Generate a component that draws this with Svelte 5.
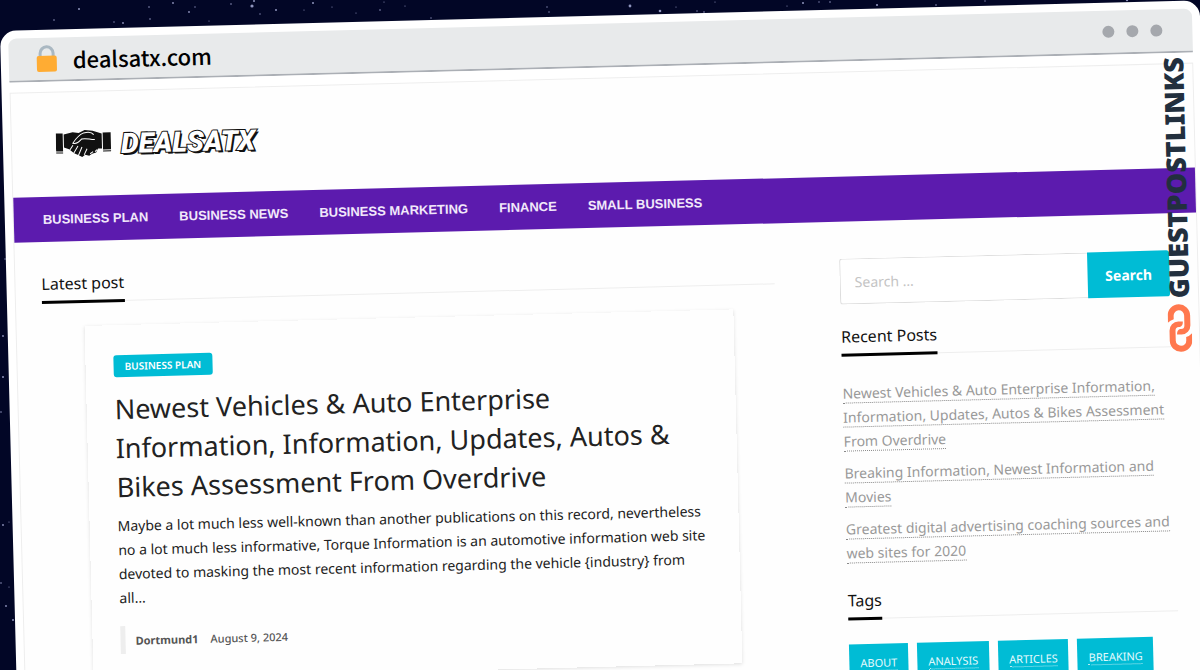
<script>
  const menu = [
    'Business Plan',
    'Business News',
    'Business Marketing',
    'Finance',
    'Small Business',
  ];

  const recentPosts = [
    'Newest Vehicles & Auto Enterprise Information, Information, Updates, Autos & Bikes Assessment From Overdrive',
    'Breaking Information, Newest Information and Movies',
    'Greatest digital advertising coaching sources and web sites for 2020',
  ];

  const tags = ['About', 'Analysis', 'Articles', 'Breaking'];

  // x, y, radius
  const stars = [
    [54, 20, 0.8],
    [79, 9, 1],
    [114, 22, 0.7],
    [123, 23, 0.9],
    [149, 7, 0.8],
    [150, 19, 0.8],
    [173, 3, 0.9],
    [189, 12, 0.9],
    [195, 7, 0.7],
    [209, 21, 0.6],
    [231, 4, 0.8],
    [252, 6, 1.6],
    [254, 1, 1],
    [260, 14, 0.7],
    [276, 10, 1],
    [304, 10, 0.6],
    [313, 3, 1],
    [332, 7, 0.6],
    [356, 13, 0.6],
    [380, 10, 0.8],
    [384, 2, 0.6],
    [405, 6, 0.6],
    [431, 18, 0.7],
    [547, 7, 0.7],
    [549, 12, 0.7],
    [630, 6, 1.4],
    [660, 11, 1.3],
    [676, 7, 0.6],
    [697, 11, 0.7],
    [704, 12, 0.8],
    [715, 2, 0.6],
    [787, 6, 0.6],
    [803, 3, 1],
    [819, 2, 0.7],
    [830, 2, 0.8],
    [877, 5, 1.1],
    [936, 5, 0.8],
    [985, 1, 0.7],
    [1127, 0, 1.2],
    [5, 259, 0.7],
    [3, 336, 0.9],
    [3, 377, 1],
    [1, 412, 0.8],
    [3, 525, 0.9],
    [9, 522, 0.6],
    [1, 583, 0.8],
    [9, 587, 0.6],
    [6, 606, 0.9],
    [13, 620, 1],
  ];

  let search = '';
</script>

<div class="page">
  <svg class="stars" aria-hidden="true">
    {#each stars as [x, y, r]}
      <circle cx={x} cy={y} {r} />
    {/each}
  </svg>

  <div class="window">
    <div class="titlebar">
      <svg class="lock" viewBox="0 0 22 28" aria-hidden="true">
        <path
          d="M4.500 14V8.500a6.500 6.500 0 0 1 13 0V14"
          fill="none"
          stroke="#aab8c2"
          stroke-width="3"
        />
        <rect x="1" y="11" width="20" height="16" rx="2" fill="#ffac33" />
      </svg>
      <span class="domain">dealsatx.com</span>
      <div class="dots"><i></i><i></i><i></i></div>
    </div>

    <div class="site">
      <header>
        <a class="logo" href="#home">
          <svg viewBox="0 0 56 30" aria-hidden="true">
            <path d="M0 4h7v18H0zM47 4h8v17h-8zM0 23h7v1H0zM47 22h8v1h-8z" />
            <path
              d="M8 5l9-2 6 1 6-3 8 1 9 3v15h-4l-2 4-4 1-3 2-4-1-3 2-4-2-4-2-5-4-5-2z"
            />
            <path
              d="M38 6c-2-3-6-3-10-2-5 2-9 7-11 10 4 1 6-1 9-4 5-1 8 1 13 1M17 16l-4 6M22 17l-5 8M26 18l-4 9M31 20l-3 6M34 25l3-2M39 23l2-2"
              fill="none"
              stroke="#fff"
              stroke-width="1"
            />
          </svg>
          <span>DEALSATX</span>
        </a>
      </header>

      <nav>
        {#each menu as item}
          <a href="#menu">{item}</a>
        {/each}
      </nav>

      <div class="columns">
        <main>
          <h2 class="heading"><span>Latest post</span></h2>
          <article>
            <a class="badge" href="#plan">Business Plan</a>
            <h1>
              Newest Vehicles &amp; Auto Enterprise Information, Information,
              Updates, Autos &amp; Bikes Assessment From Overdrive
            </h1>
            <p>
              Maybe a lot much less well-known than another publications on this
              record, nevertheless no a lot much less informative, Torque
              Information is an automotive information web site devoted to
              masking the most recent information regarding the vehicle
              &lbrace;industry&rbrace; from all…
            </p>
            <div class="meta">
              <b>Dortmund1</b>
              <time datetime="2024-08-09">August 9, 2024</time>
            </div>
          </article>
        </main>

        <aside>
          <form on:submit|preventDefault>
            <input
              type="search"
              aria-label="Search"
              placeholder="Search …"
              bind:value={search}
            />
            <button>Search</button>
          </form>

          <h2 class="heading"><span>Recent Posts</span></h2>
          <ul class="recent">
            {#each recentPosts as post}
              <li><a href="#post">{post}</a></li>
            {/each}
          </ul>

          <h2 class="heading"><span>Tags</span></h2>
          <div class="tags">
            {#each tags as tag}
              <a href="#tag"><span>{tag}</span></a>
            {/each}
          </div>
        </aside>
      </div>
    </div>

    <div class="watermark">
      <svg viewBox="0 0 24 48" aria-hidden="true">
        <path
          d="M0 18.500V11.500a11 11 0 0 1 22.500 0v10a9 9 0 0 1-9 9h-4.500v-1a5 5 0 0 1 3-4.500h1a3.500 3.500 0 0 0 3.500-3.500v-10a5 5 0 0 0-10.500 0v3.500a12 12 0 0 0-6 3.500z"
        />
        <path
          d="M24 29.500V36.500a11 11 0 0 1-22.500 0v-10a9 9 0 0 1 9-9h4.500v1a5 5 0 0 1-3 4.500h-1a3.500 3.500 0 0 0-3.500 3.500v10a5 5 0 0 0 10.500 0v-3.500a12 12 0 0 0 6-3.500z"
        />
      </svg>
      <span>GUESTPOSTLINKS</span>
    </div>
  </div>
</div>

<style>
  :global(body) {
    margin: 0;
  }

  .page {
    position: relative;
    height: 100vh;
    overflow: hidden;
    padding-top: 31px;
    box-sizing: border-box;
    background: #020626;
    font-family: 'Noto Sans', sans-serif;
    color: #222;
  }

  .stars {
    position: absolute;
    top: 0;
    left: 0;
    width: 100%;
    height: 100%;
    fill: #8f94bd;
  }

  .window {
    position: relative;
    box-sizing: border-box;
    min-height: 110vh;
    padding: 8px;
    background: #fff;
    border-radius: 16px;
    transform: rotate(-1.46deg);
    transform-origin: 0 0;
  }

  .titlebar {
    display: flex;
    align-items: center;
    box-sizing: border-box;
    height: 44px;
    padding: 0 30px 0 27px;
    background: #e8eaeb;
    border-bottom: 2px solid #abafb5;
    border-radius: 8px 8px 0 0;
  }

  .lock {
    width: 22px;
    height: 28px;
  }

  .domain {
    margin-left: 15px;
    font-family: 'Noto Sans CJK JP', sans-serif;
    font-size: 22px;
    font-weight: 500;
    line-height: 28px;
    color: #000;
  }

  .dots {
    display: flex;
    gap: 12px;
    margin-left: auto;
  }

  .dots i {
    width: 12px;
    height: 12px;
    border-radius: 50%;
    background: #a5a8ad;
  }

  .site {
    margin-top: 10px;
    background: #fefefe;
    border: 1px solid #eee;
  }

  header {
    display: flex;
    align-items: center;
    height: 104px;
    padding: 0 44px;
  }

  .logo {
    display: flex;
    align-items: center;
    gap: 9px;
    text-decoration: none;
  }

  .logo svg {
    width: 56px;
    height: 30px;
    fill: #111;
  }

  .logo span {
    font-family: Roboto, sans-serif;
    font-size: 28px;
    font-style: italic;
    font-weight: 900;
    color: #fff;
    -webkit-text-stroke: 2px #111;
    paint-order: stroke fill;
    text-shadow: 2px 2px 0 #111;
  }

  nav {
    display: flex;
    align-items: center;
    gap: 31px;
    height: 45px;
    padding: 0 29px;
    background: #5c1bae;
  }

  nav a {
    font-family: 'Liberation Sans', sans-serif;
    font-size: 13px;
    font-weight: 700;
    text-transform: uppercase;
    text-decoration: none;
    color: #f1e8fa;
  }

  .columns {
    display: grid;
    grid-template-columns: 1fr 330px;
    gap: 65px;
    padding: 30px 28px 30px 26px;
  }

  aside {
    padding-top: 7px;
  }

  .heading {
    display: flex;
    margin: 0;
    border-bottom: 1px solid #eee;
    font-size: 16px;
    font-weight: 400;
    line-height: 24px;
    color: #111;
  }

  .heading span {
    padding-bottom: 5px;
    margin-bottom: -2px;
    border-bottom: 3px solid #000;
  }

  article {
    margin: 24px 42px 0;
    padding: 28px 32px 25px 28px;
    box-shadow: 0 1px 4px rgba(0, 0, 0, 0.12);
  }

  .badge {
    display: inline-block;
    padding: 0 11px;
    border-radius: 3px;
    background: #00bcd5;
    font-size: 10px;
    font-weight: 600;
    line-height: 22px;
    text-transform: uppercase;
    text-decoration: none;
    color: #fff;
  }

  h1 {
    margin: 12px 0 0;
    font-size: 27px;
    font-weight: 400;
    line-height: 39px;
  }

  p {
    margin: 8px 0 0;
    font-size: 14px;
    line-height: 24px;
  }

  .meta {
    display: flex;
    align-items: center;
    gap: 12px;
    height: 28px;
    margin-top: 16px;
    padding-left: 10px;
    border-left: 5px solid #eee;
    font-size: 11px;
    font-weight: 500;
    color: #555;
  }

  form {
    display: flex;
    height: 46px;
    margin-bottom: 20px;
  }

  input {
    flex: 1;
    min-width: 0;
    padding: 0 14px;
    border: 1px solid #ddd;
    border-right: 0;
    border-radius: 3px 0 0 3px;
    background: #fff;
    font: 14px 'Noto Sans', sans-serif;
  }

  input::placeholder {
    color: #c4c4c4;
  }

  button {
    width: 82px;
    border: 0;
    border-radius: 0 3px 3px 0;
    background: #00bcd5;
    font: 700 14px 'Noto Sans', sans-serif;
    color: #fff;
  }

  .recent {
    margin: 26px 0 23px;
    padding: 0;
    list-style: none;
    font-size: 14px;
    line-height: 24px;
  }

  .recent li {
    margin-bottom: 8px;
  }

  .recent a {
    border-bottom: 1px dotted #888;
    text-decoration: none;
    color: #999;
  }

  .tags {
    display: flex;
    flex-wrap: wrap;
    gap: 9px;
    margin-top: 25px;
  }

  .tags a {
    padding: 10px 11px;
    background: #00bcd5;
    font-size: 11px;
    line-height: 17px;
    text-transform: uppercase;
    text-decoration: none;
    color: #e4fafd;
  }

  .tags span {
    border-bottom: 1px dotted #b5ecf3;
  }

  .watermark {
    position: absolute;
    top: 56px;
    right: 14px;
    display: flex;
    flex-direction: column-reverse;
    align-items: center;
    gap: 6px;
  }

  .watermark svg {
    width: 24px;
    height: 48px;
    fill: #ff784e;
  }

  .watermark span {
    writing-mode: vertical-rl;
    transform: rotate(180deg);
    font-family: 'Noto Sans', sans-serif;
    font-size: 27px;
    font-weight: 900;
    line-height: 28px;
    color: #222f3e;
  }
</style>
